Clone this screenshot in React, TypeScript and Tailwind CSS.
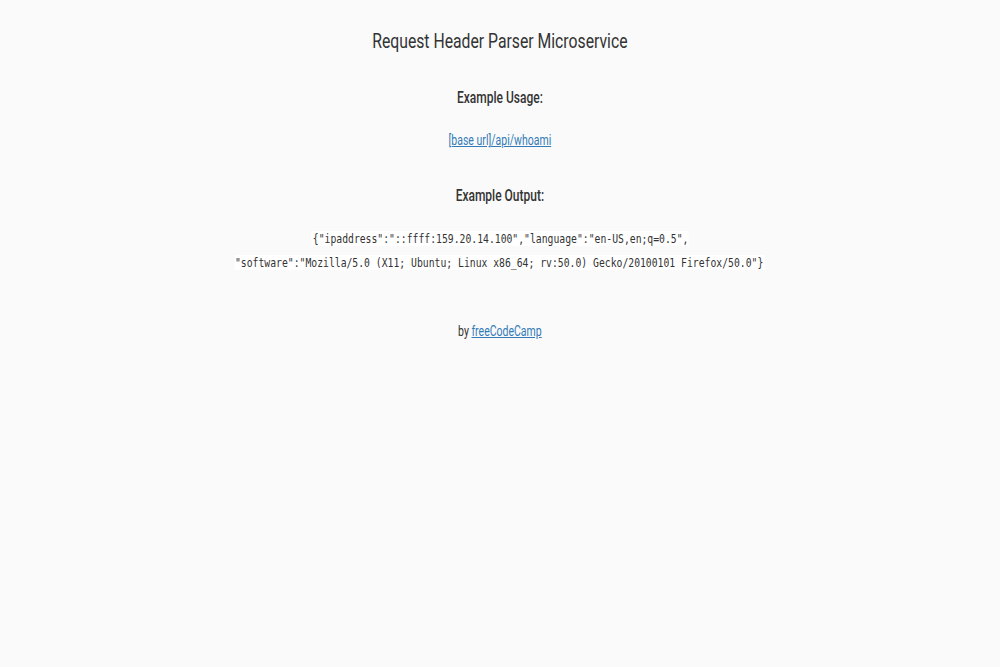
export default function App() {
  return (
    <div className="min-h-[667px] bg-[#fafafa] text-[#333] overflow-hidden" style={{ fontFamily: "Roboto, 'Liberation Sans', sans-serif" }}>
      <div className="w-[1333px] origin-top-left scale-x-75 flex flex-col items-center">
        <h1 className="mt-[28px] text-[21px] leading-[26px] font-normal">Request Header Parser Microservice</h1>
        <h3 className="mt-[34px] text-[16px] leading-[20px] font-medium">Example Usage:</h3>
        <a href="#" className="mt-[23px] text-[14px] leading-[18px] text-[#337ab7] underline">[base url]/api/whoami</a>
        <h3 className="mt-[37px] text-[16px] leading-[20px] font-medium">Example Output:</h3>
        <p className="mt-[21px] text-center text-[13px] leading-[24px]">
          <code className="bg-white px-[2px]" style={{ fontFamily: "'DejaVu Sans Mono', 'Liberation Mono', monospace" }}>
            {'{"ipaddress":"::ffff:159.20.14.100","language":"en-US,en;q=0.5",'}
            <br />
            {'"software":"Mozilla/5.0 (X11; Ubuntu; Linux x86_64; rv:50.0) Gecko/20100101 Firefox/50.0"}'}
          </code>
        </p>
        <p className="mt-[47px] text-[14px] leading-[18px]">
          by <a href="#" className="text-[#337ab7] underline">freeCodeCamp</a>
        </p>
      </div>
    </div>
  );
}
